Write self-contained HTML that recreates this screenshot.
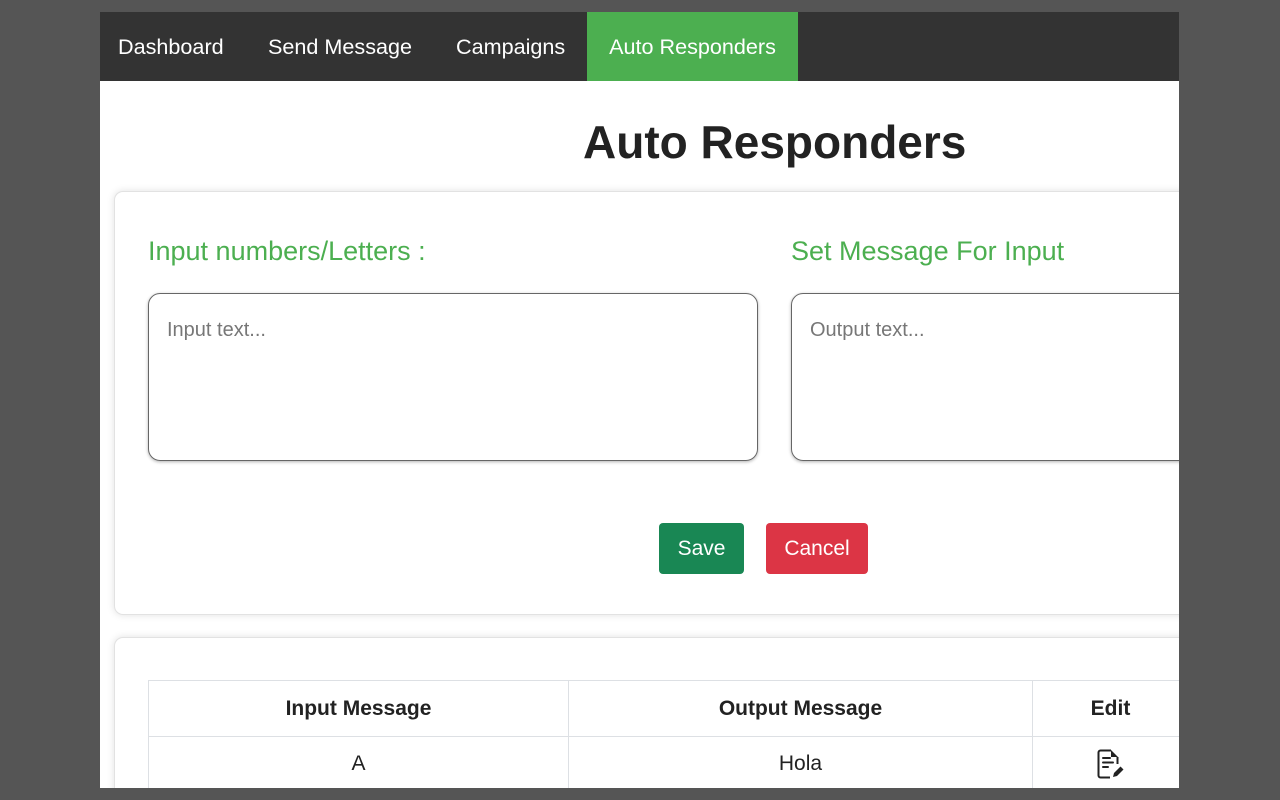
<!DOCTYPE html>
<html><head><meta charset="utf-8"><style>
*{box-sizing:border-box;margin:0;padding:0}
body{width:1280px;height:800px;background:#555;position:relative;overflow:hidden;font-family:"Liberation Sans",Arial,sans-serif}
#page{position:absolute;left:100px;top:12px;width:1079px;height:776px;background:#fff;overflow:hidden}
nav{position:absolute;left:0;top:0;width:100%;height:69px;background:#333}
nav a{position:absolute;top:0;height:69px;line-height:70px;color:#fff;font-size:21.6px;text-decoration:none}
h1{position:absolute;left:483px;top:103px;font-size:46px;font-weight:bold;color:#222;white-space:nowrap}
.card{position:absolute;left:14px;width:1100px;background:#fff;border:1px solid #e2e2e2;border-radius:9px;box-shadow:0 0 8px rgba(0,0,0,.12)}
.lbl{position:absolute;color:#4caf50;font-size:27px;white-space:nowrap}
.ta{position:absolute;top:101px;height:168px;border:1.5px solid #666;border-radius:12px;box-shadow:0 1px 3px rgba(0,0,0,.3);color:#777;font-size:20px;padding:25px 18px}
.btn{position:absolute;top:331px;height:51px;border-radius:4px;color:#fff;font-size:21px;line-height:51px;text-align:center}
table{position:absolute;left:33px;top:42px;border-collapse:collapse;font-size:21px;color:#222}
td,th{border:1px solid #dde0e4;text-align:center}
th{height:56px;font-weight:bold}
td{height:54px}
</style></head><body>
<div id="page">
<nav>
<a style="left:18px">Dashboard</a>
<a style="left:168px">Send Message</a>
<a style="left:356px">Campaigns</a>
<a style="left:487px;width:211px;background:#4caf50;text-align:center">Auto Responders</a>
</nav>
<h1>Auto Responders</h1>
<div class="card" style="top:179px;height:424px">
<div class="lbl" style="left:33px;top:44px">Input numbers/Letters :</div>
<div class="lbl" style="left:676px;top:44px">Set Message For Input</div>
<div class="ta" style="left:33px;width:610px">Input text...</div>
<div class="ta" style="left:676px;width:450px">Output text...</div>
<div class="btn" style="left:544px;width:85px;background:#198754">Save</div>
<div class="btn" style="left:651px;width:102px;background:#dc3545">Cancel</div>
</div>
<div class="card" style="top:625px;height:170px">
<table>
<tr><th style="width:420px">Input Message</th><th style="width:464px">Output Message</th><th style="width:156px">Edit</th></tr>
<tr><td>A</td><td>Hola</td><td><svg width="28" height="30" viewBox="0 0 28 30" style="vertical-align:middle;margin-right:2px"><path d="M15 1.5H4.5a2 2 0 0 0-2 2v23a2 2 0 0 0 2 2H14M21.5 15V8" fill="none" stroke="#222" stroke-width="2" stroke-linejoin="round"/><path d="M15 1l7 7h-7z" fill="#222"/><path d="M7 9h7M7 13.5h10M7 18h5" stroke="#222" stroke-width="2" stroke-linecap="round"/><path d="M17 28l1-4 6.5-6.5 3 3L21 27z" fill="#222"/></svg></td></tr>
</table>
</div>
</div>
</body></html>
